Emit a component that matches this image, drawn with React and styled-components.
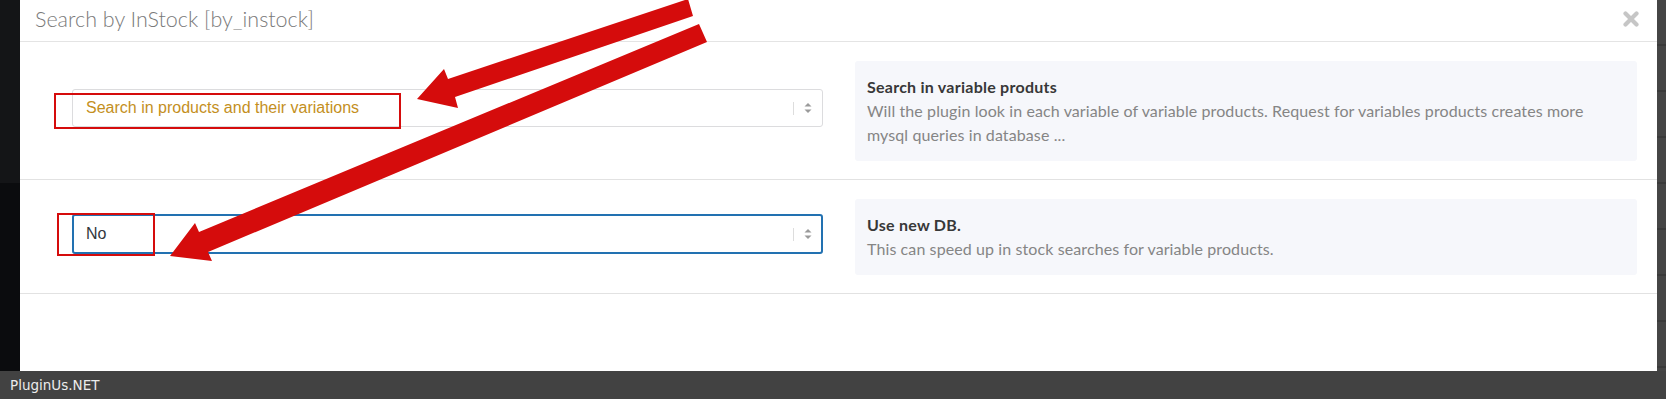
import React from "react"
import styled, { createGlobalStyle } from "styled-components"

const GlobalStyle = createGlobalStyle`
    html, body {
        margin: 0;
        padding: 0;
        background: #0b0c0e;
    }
    * {
        box-sizing: border-box;
    }
`

const options = [
    {
        value: "Search in products and their variations",
        valueColor: "#c48f1d",
        focused: false,
        title: "Search in variable produts",
        text: "Will the plugin look in each variable of variable products. Request for variables products creates more mysql queries in database ..."
    },
    {
        value: "No",
        valueColor: "#32373c",
        focused: true,
        title: "Use new DB.",
        text: "This can speed up in stock searches for variable products."
    }
]

const Stepper = () => (
    <StepperBox>
        <svg width="8" height="12" viewBox="0 0 8 12">
            <polygon points="4,1 7.5,4.5 0.5,4.5" fill="#9a9a9a" />
            <polygon points="0.5,7.5 7.5,7.5 4,11" fill="#9a9a9a" />
        </svg>
    </StepperBox>
)

const CloseIcon = () => (
    <svg width="16" height="16" viewBox="0 0 16 16">
        <path d="M2.5 2.5 L13.5 13.5 M13.5 2.5 L2.5 13.5" stroke="#c6c6c6" strokeWidth="4.2" strokeLinecap="round" />
    </svg>
)

const App = () => {
    const rows = options.map((opt, index) => (
        <OptionRow key={index}>
            <SelectBox focused={opt.focused}>
                <SelectValue color={opt.valueColor}>{opt.value}</SelectValue>
                <Stepper />
            </SelectBox>
            <InfoBox>
                <InfoTitle>{opt.title}</InfoTitle>
                <InfoText>{opt.text}</InfoText>
            </InfoBox>
        </OptionRow>
    ))

    return (
        <Page>
            <GlobalStyle />
            <Stage>
                <LeftShade />
                <Modal>
                    <ModalHeader>
                        <ModalTitle>Search by InStock [by_instock]</ModalTitle>
                        <CloseIcon />
                    </ModalHeader>
                    {rows}
                </Modal>
                <RightShade />
            </Stage>
            <Footer>PluginUs.NET</Footer>
            <Annotations width="1666" height="399" viewBox="0 0 1666 399">
                <rect x="55" y="94" width="345" height="34" fill="none" stroke="#d50c0c" strokeWidth="2" />
                <rect x="58" y="214" width="96" height="41" fill="none" stroke="#d50c0c" strokeWidth="2" />
                <polygon points="417,99 444,69 448,79 688,-1 693,16 455,97 458,108" fill="#d50c0c" />
                <polygon points="170,256 195,223 199,232 699,24 707,42 208,252 212,261" fill="#d50c0c" />
            </Annotations>
        </Page>
    )
}

const Page = styled.div`
    position: relative;
    width: 1666px;
    height: 399px;
    display: flex;
    flex-direction: column;
    overflow: hidden;
`
const Stage = styled.div`
    height: 371px;
    display: flex;
`
const LeftShade = styled.div`
    width: 20px;
    background: linear-gradient(#141517 0, #141517 183px, #0b0c0e 183px);
`
const RightShade = styled.div`
    flex: 1;
    background: repeating-linear-gradient(#454545 0, #454545 44px, #3a3a3a 44px, #3a3a3a 46px);
`
const Modal = styled.div`
    width: 1637px;
    background: #ffffff;
    display: flex;
    flex-direction: column;
`
const ModalHeader = styled.div`
    height: 42px;
    display: flex;
    justify-content: space-between;
    align-items: center;
    padding: 0 18px 4px 15px;
    border-bottom: 1px solid #e4e4e4;
`
const ModalTitle = styled.h3`
    margin: 0;
    font-family: Lato, "Open Sans", sans-serif;
    font-weight: 300;
    font-size: 21.5px;
    color: #7a7a7a;
`
const OptionRow = styled.div`
    display: flex;
    align-items: center;
    gap: 32px;
    padding: 19px 20px 18px 52px;
    border-bottom: 1px solid #e2e2e2;
`
const SelectBox = styled.div`
    width: 751px;
    height: ${props => props.focused ? "40px" : "38px"};
    margin-bottom: 6px;
    display: flex;
    align-items: center;
    justify-content: space-between;
    padding: 0 ${props => props.focused ? "9px 0 12px" : "10px 0 13px"};
    border: ${props => props.focused ? "2px solid #2271b1" : "1px solid #dcdcde"};
    border-radius: 3px;
    background: #ffffff;
`
const SelectValue = styled.span`
    font-family: "Liberation Sans", Arial, sans-serif;
    font-size: 16px;
    color: ${props => props.color};
`
const StepperBox = styled.span`
    display: flex;
    align-items: center;
    height: 13px;
    padding-left: 10px;
    border-left: 1px solid #dddddd;
`
const InfoBox = styled.div`
    flex: 1;
    padding: 14px 12px;
    background: #f6f7fb;
    border-radius: 3px;
    font-family: Lato, "Open Sans", sans-serif;
    line-height: 24px;
`
const InfoTitle = styled.div`
    font-size: 16px;
    font-weight: 700;
    letter-spacing: 0.25px;
    color: #383838;
`
const InfoText = styled.div`
    font-size: 16px;
    letter-spacing: 0.1px;
    color: #858585;
`
const Footer = styled.div`
    height: 28px;
    display: flex;
    align-items: center;
    padding-left: 10px;
    background: #424242;
    font-family: "DejaVu Sans", sans-serif;
    font-size: 13.5px;
    color: #ececec;
`
const Annotations = styled.svg`
    position: absolute;
    left: 0;
    top: 0;
    pointer-events: none;
`

export default App
